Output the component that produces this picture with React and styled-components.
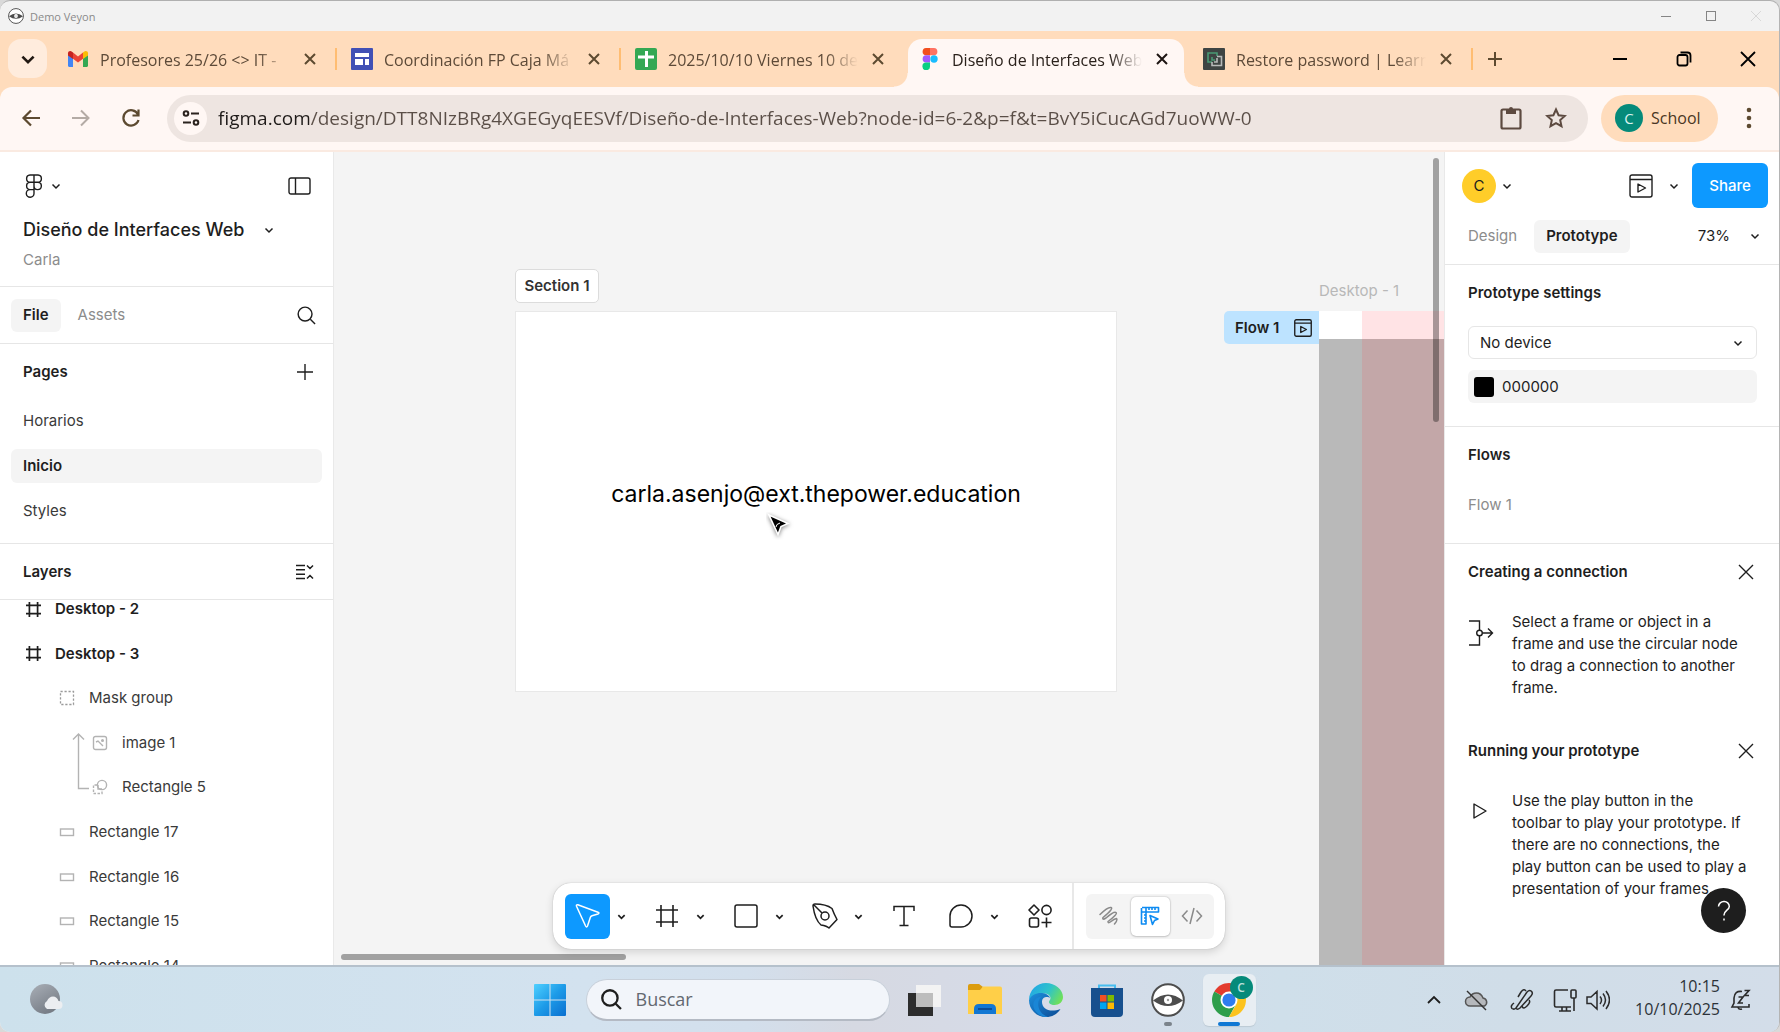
import React from "react";
import styled, { createGlobalStyle, css } from "styled-components";

const system = `"Open Sans", "Noto Sans", sans-serif`;
const inter = `Inter, "Liberation Sans", sans-serif`;

const GlobalStyle = createGlobalStyle`
  *, *::before, *::after { box-sizing: border-box; }
  body { margin: 0; background: #d9d9d9; }
  button, input, select { font: inherit; color: inherit; border: 0; margin: 0; padding: 0; background: none; }
  h1, h2, h3, p, ul { margin: 0; padding: 0; font: inherit; }
  ul { list-style: none; }
  svg { display: block; flex: none; }
`;

/* ---------- window ---------- */
const Window = styled.div`
  display: flex;
  flex-direction: column;
  height: 100vh;
  overflow: hidden;
  border-top: 1px solid #b0b0b0;
  border-right: 1px solid #b4b4b4;
  border-radius: 10px;
  background: #f2f2f2;
  font-family: ${system};
`;
const TitleBar = styled.header`
  display: flex;
  align-items: center;
  flex: none;
  height: 30px;
  padding: 0 11px 0 8px;
  gap: 6px;
  color: #8a8a8a;
  font-size: 11px;
`;
const WindowButtons = styled.div`
  display: flex;
  margin-left: auto;
  gap: ${(p) => p.$gap}px;
`;
const IconButton = styled.button`
  display: flex;
  align-items: center;
  justify-content: center;
  flex: none;
  width: ${(p) => p.$w || 24}px;
  height: ${(p) => p.$h || p.$w || 24}px;
`;

/* ---------- browser ---------- */
const TabStrip = styled.nav`
  display: flex;
  flex: none;
  height: 56px;
  padding: 8px 0 0 8px;
  background: #ffdcbc;
`;
const TabSearch = styled.button`
  display: flex;
  align-items: center;
  justify-content: center;
  width: 39px;
  height: 39px;
  margin-right: 9px;
  border-radius: 13px;
  background: #ffecdd;
`;
const Tab = styled.div`
  position: relative;
  display: flex;
  align-items: center;
  flex: none;
  width: 276px;
  height: 48px;
  padding: 0 10px 8px 11px;
  color: #5d4a38;
  ${(p) =>
    p.$active &&
    css`
      color: #2a211b;
      background: #fff7f4;
      border-radius: 14px 14px 0 0;
      &::before,
      &::after {
        content: "";
        position: absolute;
        bottom: 0;
        width: 14px;
        height: 14px;
      }
      &::before {
        right: 100%;
        background: radial-gradient(circle at 0 0, transparent 13px, #fff7f4 14px);
      }
      &::after {
        left: 100%;
        background: radial-gradient(circle at 100% 0, transparent 13px, #fff7f4 14px);
      }
    `}
`;
const TabIcon = styled.span`
  display: flex;
  justify-content: center;
  width: 22px;
  margin-right: 11px;
`;
const TabTitle = styled.span`
  flex: 1;
  min-width: 0;
  padding-top: 2px;
  white-space: nowrap;
  font-size: 16px;
  line-height: 24px;
  mask-image: linear-gradient(90deg, #000 158px, transparent 190px);
`;
const TabGap = styled.span`
  flex: none;
  width: 2px;
  height: 22px;
  margin: 9px 3px 0;
  background: ${(p) => (p.$hidden ? "transparent" : "#ffbd72")};
`;
const TabActions = styled.div`
  display: flex;
  flex: 1;
  height: 40px;
  align-items: center;
  padding: 0 19px 0 7px;
`;
const AddressRow = styled.div`
  background: #ffdcbc;
`;
const AddressBar = styled.div`
  display: flex;
  align-items: center;
  height: 65px;
  padding: 0 18px 1px 16px;
  border-bottom: 2px solid #faeae1;
  border-radius: 12px 12px 0 0;
  background: #fff7f4;
`;
const NavButtons = styled.div`
  display: flex;
  gap: 20px;
  width: 151px;
`;
const Omnibox = styled.label`
  display: flex;
  align-items: center;
  flex: 1;
  height: 47px;
  padding: 0 18px 0 7px;
  border-radius: 24px;
  background: #eee5e1;
`;
const SiteInfo = styled.span`
  display: flex;
  align-items: center;
  justify-content: center;
  width: 33px;
  height: 33px;
  margin-right: 11px;
  border-radius: 50%;
  background: #fff7f4;
`;
const UrlInput = styled.input`
  flex: 1;
  min-width: 0;
  height: 32px;
  font-size: 19px;
  color: transparent;
  background: linear-gradient(90deg, #1f1b19 91px, #5a4e47 91px);
  background-clip: text;
`;
const OmniActions = styled.span`
  display: flex;
  gap: 17px;
`;
const Profile = styled.button`
  display: flex;
  align-items: center;
  gap: 8px;
  height: 47px;
  width: 117px;
  margin: 0 19px 0 13px;
  padding: 0 14px;
  border-radius: 24px;
  background: #ffdcbc;
  color: #4a3623;
  font-size: 16px;
`;
const ProfileBadge = styled.span`
  display: flex;
  align-items: center;
  justify-content: center;
  width: 28px;
  height: 28px;
  border-radius: 50%;
  background: #058a7a;
  color: #d8f2ee;
  font-size: 15px;
`;

/* ---------- editor ---------- */
const Editor = styled.main`
  display: grid;
  grid-template-columns: 334px minmax(0, 1fr) 335px;
  flex: 1;
  min-height: 0;
  font-family: ${inter};
  font-size: 15px;
  line-height: 22px;
  color: #1e1e1e;
`;
const Sidebar = styled.aside`
  display: flex;
  flex-direction: column;
  min-height: 0;
  overflow: hidden;
  background: #fff;
  border-right: 1px solid #e9e9e9;
`;
const FileHeader = styled.div`
  padding: 11px 21px 0 23px;
  height: 135px;
  flex: none;
  border-bottom: 1px solid #e6e6e6;
`;
const HeaderRow = styled.div`
  display: flex;
  align-items: center;
  justify-content: space-between;
  height: 46px;
`;
const Cluster = styled.button`
  display: flex;
  align-items: center;
  gap: ${(p) => p.$gap || 8}px;
  padding: 0 ${(p) => p.$end || 0}px 0 ${(p) => p.$start || 0}px;
`;
const FileName = styled.h1`
  font-size: 18px;
  font-weight: 500;
  line-height: 24px;
`;
const TitleRow = styled.div`
  display: flex;
  align-items: center;
  gap: 18px;
  height: 42px;
`;
const Muted = styled.p`
  color: #8c8c8c;
  line-height: ${(p) => p.$line || 22}px;
`;
const TabsRow = styled.div`
  display: flex;
  align-items: center;
  flex: none;
  height: 57px;
  padding: 0 15px 0 11px;
  gap: 5px;
  border-bottom: 1px solid #e6e6e6;
`;
const Pill = styled.button`
  height: 33px;
  padding: 0 12px;
  border-radius: 6px;
  background: ${(p) => (p.$on ? "#f4f4f4" : "transparent")};
  color: ${(p) => (p.$on ? "#1e1e1e" : "#8c8c8c")};
  font-weight: ${(p) => (p.$on ? 600 : 400)};
`;
const Push = styled.span`
  margin: 0 ${(p) => p.$after || 0}px 0 auto;
`;
const Section = styled.section`
  flex: none;
  border-bottom: 1px solid #e6e6e6;
  padding-bottom: ${(p) => p.$bottom || 0}px;
`;
const SectionHead = styled.div`
  display: flex;
  align-items: center;
  justify-content: space-between;
  height: 55px;
  padding: 0 16px 0 23px;
`;
const Heading = styled.h2`
  font-weight: 600;
`;
const PageList = styled.ul`
  display: grid;
  gap: 11px;
  padding: 5px 11px 0;
`;
const PageItem = styled.button`
  width: 100%;
  height: 34px;
  padding: 0 12px;
  border-radius: 6px;
  text-align: left;
  background: ${(p) => (p.$on ? "#f4f4f4" : "transparent")};
  font-weight: ${(p) => (p.$on ? 600 : 400)};
  color: ${(p) => (p.$on ? "#1e1e1e" : "#3a3a3a")};
`;
const LayerView = styled.div`
  flex: 1;
  min-height: 0;
  overflow: hidden;
`;
const LayerList = styled.ul`
  position: relative;
  display: grid;
  grid-auto-rows: 1fr;
  height: 401px;
  margin-top: -13px;
`;
const LayerItem = styled.li`
  display: flex;
  align-items: center;
  gap: 14px;
  padding-left: ${(p) => 26 + p.$depth * 33}px;
  font-weight: ${(p) => (p.$depth ? 400 : 600)};
  color: ${(p) => (p.$depth ? "#3a3a3a" : "#1e1e1e")};
`;
const MaskLink = styled.svg`
  position: absolute;
  left: 72px;
  top: 145px;
`;

/* ---------- canvas ---------- */
const Canvas = styled.div`
  position: relative;
  overflow: hidden;
  background: #f4f4f4;
`;
const SectionLabel = styled.div`
  position: absolute;
  left: 181px;
  top: 117px;
  width: 84px;
  height: 34px;
  border: 1px solid #dcdcdc;
  border-radius: 5px;
  background: #fff;
  text-align: center;
  line-height: 32px;
  font-weight: 600;
  color: #333;
`;
const SectionBox = styled.div`
  position: absolute;
  left: 181px;
  top: 159px;
  width: 602px;
  height: 381px;
  display: flex;
  align-items: center;
  justify-content: center;
  padding-bottom: 16px;
  border: 1px solid #e8e8e8;
  background: #fff;
  color: #000;
  font-size: 23px;
  line-height: 30px;
`;
const Pointer = styled.svg`
  position: absolute;
  left: 432px;
  top: 360px;
`;
const FrameName = styled.span`
  position: absolute;
  left: 985px;
  top: 128px;
  color: #b8b8b8;
`;
const FlowTag = styled.button`
  position: absolute;
  left: 890px;
  top: 159px;
  display: flex;
  align-items: center;
  justify-content: space-between;
  width: 95px;
  height: 33px;
  padding: 0 7px 0 11px;
  border-radius: 5px 0 0 5px;
  background: #bde3ff;
  font-weight: 600;
`;
const FrameBox = styled.div`
  position: absolute;
  left: 985px;
  right: 0;
  top: 159px;
  bottom: 0;
  background: linear-gradient(#fff 28px, #b9b9b9 28px);
`;
const ColumnGuide = styled.div`
  position: absolute;
  left: 43px;
  right: 0;
  top: 0;
  bottom: 0;
  background: linear-gradient(#ffe3e5 28px, #c3a7a8 28px);
`;
const ScrollY = styled.div`
  position: absolute;
  right: 5px;
  top: 6px;
  width: 6px;
  height: 264px;
  border-radius: 3px;
  background: rgba(0, 0, 0, 0.34);
`;
const ScrollX = styled.div`
  position: absolute;
  left: 7px;
  bottom: 5px;
  width: 285px;
  height: 6px;
  border-radius: 3px;
  background: rgba(0, 0, 0, 0.34);
`;
const ToolBar = styled.div`
  position: absolute;
  left: 50%;
  bottom: 16px;
  transform: translateX(-50%);
  display: flex;
  align-items: center;
  height: 66px;
  padding: 0 11px 0 12px;
  border-radius: 18px;
  background: #fff;
  box-shadow: 0 0 1px rgba(0, 0, 0, 0.35), 0 3px 8px rgba(0, 0, 0, 0.14);
`;
const Tools = styled.div`
  display: flex;
  gap: 12px;
`;
const ToolGroup = styled.div`
  display: flex;
`;
const ToolButton = styled(IconButton)`
  width: 45px;
  height: 45px;
  border-radius: 6px;
  background: ${(p) => (p.$on ? "#0d99ff" : "transparent")};
`;
const ToolDivider = styled.span`
  width: 2px;
  height: 66px;
  margin: 0 12px 0 10px;
  background: #e8e8e8;
`;
const Modes = styled.div`
  display: flex;
  align-items: center;
  justify-content: space-between;
  width: 128px;
  height: 45px;
  padding: 0 3px;
  border-radius: 6px;
  background: #f4f4f4;
`;
const ModeButton = styled(IconButton)`
  width: 39px;
  height: 39px;
  border-radius: 5px;
  ${(p) => p.$on && "background: #fff; box-shadow: 0 0 2px rgba(0,0,0,.3), 0 1px 2px rgba(0,0,0,.12);"}
`;

/* ---------- right panel ---------- */
const Inspector = styled(Sidebar)`
  position: relative;
  border-right: 0;
  border-left: 1px solid #e9e9e9;
`;
const InspectorTop = styled.div`
  height: 113px;
  flex: none;
  padding: 11px 11px 0 17px;
  border-bottom: 1px solid #e6e6e6;
`;
const Avatar = styled.span`
  display: flex;
  align-items: center;
  justify-content: center;
  width: 34px;
  height: 34px;
  border-radius: 50%;
  background: #ffcd29;
`;
const ShareButton = styled.button`
  width: 76px;
  height: 45px;
  margin-left: 9px;
  border-radius: 6px;
  background: #0d99ff;
  color: #fff;
  font-weight: 500;
`;
const InspectorRow = styled.div`
  display: flex;
  align-items: center;
`;
const InspectorTabs = styled(InspectorRow)`
  height: 56px;
  gap: 5px;
  margin-left: -6px;
`;
const Fields = styled.div`
  display: grid;
  gap: 11px;
  padding: 6px 22px 23px 23px;
`;
const SelectWrap = styled.label`
  position: relative;
  display: flex;
  align-items: center;
  height: 33px;
  border: 1px solid #e6e6e6;
  border-radius: 6px;
  & > svg {
    position: absolute;
    right: 13px;
    pointer-events: none;
  }
`;
const Select = styled.select`
  appearance: none;
  width: 100%;
  height: 100%;
  padding-left: 11px;
`;
const ColorField = styled.label`
  display: flex;
  align-items: center;
  gap: 8px;
  height: 33px;
  padding: 0 6px;
  border-radius: 6px;
  background: #f4f4f4;
`;
const Swatch = styled.span`
  width: 20px;
  height: 20px;
  border-radius: 3px;
  background: #000;
`;
const ColorInput = styled.input`
  flex: 1;
  min-width: 0;
`;
const FlowName = styled(Muted)`
  padding: 12px 23px 27px;
`;
const Tip = styled.section`
  padding-bottom: 24px;
`;
const TipBody = styled.div`
  display: flex;
  gap: 18px;
  padding: 12px 20px 0 23px;
  white-space: nowrap;
  & > svg {
    margin-top: 9px;
  }
`;
const TipHead = styled(SectionHead)`
  padding-right: 21px;
`;
const Help = styled.button`
  position: absolute;
  right: 33px;
  bottom: 32px;
  display: flex;
  align-items: center;
  justify-content: center;
  width: 45px;
  height: 45px;
  border-radius: 50%;
  background: #1e1e1e;
`;

/* ---------- taskbar ---------- */
const Taskbar = styled.footer`
  display: grid;
  grid-template-columns: 1fr auto 1fr;
  align-items: center;
  flex: none;
  height: 67px;
  border-top: 2px solid #b5c1cc;
  background: linear-gradient(90deg, #cde1ec 0%, #d3e2ef 33%, #d3dfec 42%, #d6d9e2 48%, #d6dbe8 58%, #cfdfea 72%, #d0dde8 85%, #d3dde9 100%);
`;
const Weather = styled.button`
  justify-self: start;
  margin-left: 29px;
`;
const Apps = styled.div`
  display: flex;
  align-items: center;
`;
const AppButton = styled.button`
  position: relative;
  display: flex;
  align-items: center;
  justify-content: center;
  width: 61px;
  height: 52px;
  &::before {
    content: "";
    position: absolute;
    inset: 0 4px;
    border-radius: 6px;
    background: ${(p) => (p.$active ? "#e8eef3" : "transparent")};
    box-shadow: ${(p) => (p.$active ? "0 1px 1px #bccad4" : "none")};
  }
  &::after {
    content: "";
    position: absolute;
    bottom: 0;
    left: 50%;
    width: ${(p) => (p.$active ? 22 : p.$running ? 8 : 0)}px;
    height: 4px;
    border-radius: 2px;
    transform: translateX(-50%);
    background: ${(p) => (p.$active ? "#0f78d4" : "#7b838b")};
  }
  & > svg {
    position: relative;
  }
`;
const AppBadge = styled.span`
  position: absolute;
  left: 31px;
  top: 2px;
  width: 23px;
  height: 23px;
  border-radius: 50%;
  background: #058a7a;
  color: #b9dfda;
  font: 600 12px/23px ${system};
  text-align: center;
`;
const SearchBox = styled.label`
  display: flex;
  align-items: center;
  gap: 14px;
  width: 304px;
  height: 42px;
  margin: 0 4px 0 5px;
  padding: 0 14px;
  border: 1px solid #c8d0da;
  border-bottom: 2px solid #b4bac4;
  border-radius: 21px;
  background: #f2f5fa;
`;
const SearchInput = styled.input`
  flex: 1;
  min-width: 0;
  font-size: 18px;
  &::placeholder {
    color: #636870;
    opacity: 1;
  }
`;
const Tray = styled.div`
  display: flex;
  align-items: center;
  justify-self: end;
  padding-right: 28px;
`;
const TrayIcons = styled.div`
  display: flex;
  align-items: center;
  gap: ${(p) => p.$gap}px;
  margin-right: ${(p) => p.$after}px;
`;
const Clock = styled.div`
  width: 97px;
  margin-right: 10px;
  padding-bottom: 3px;
  text-align: right;
  font-size: 16px;
  line-height: 23px;
  color: #2c3238;
`;

/* ---------- drawings ---------- */
const Icon = ({ w = 24, h = w, vb, color = "#1e1e1e", sw = 1.4, children }) => (
  <svg width={w} height={h} viewBox={vb || `0 0 ${w} ${h}`} fill="none" stroke={color} strokeWidth={sw} aria-hidden="true">
    {children}
  </svg>
);
const Chevron = ({ w = 10, sw = 1.5, color }) => (
  <Icon w={w} vb="0 0 10 10" sw={sw} color={color}><path d="M1.500 3.500 5 7l3.500-3.500" /></Icon>
);
const Cross = ({ s = 12, sw = 2, color }) => (
  <Icon w={s} sw={sw} color={color}><path d={`M1 1 ${s - 1} ${s - 1}M${s - 1} 1 1 ${s - 1}`} /></Icon>
);
const Veyon = ({ s }) => (
  <Icon w={s} vb="0 0 34 34" color="#4d4d4d" sw="2">
    <circle cx="17" cy="17" r="15.800" fill="#fff" />
    <path d="M2 17.500Q17 5.500 32 17.500 17 28.500 2 17.500Z" fill="#4d4d4d" stroke="none" />
    <circle cx="17" cy="17" r="4" fill="#fff" stroke="none" />
    <circle cx="17" cy="17" r="1.200" fill="#9a9a9a" stroke="none" />
  </Icon>
);
const Gmail = () => (
  <Icon w={22} h={22} sw={0}>
    <path d="M1 6v11.500c0 .8.600 1.500 1.500 1.500H6v-9z" fill="#4285f4" />
    <path d="M21 6v11.500c0 .8-.6 1.500-1.500 1.500H16v-9z" fill="#34a853" />
    <path d="M6 4.500v6.200l5 3.800 5-3.800V4.500l-5 3.900z" fill="#ea4335" />
    <path d="M1 5.300v2.200L6 11V4.500l-1-.8C3.300 2.400 1 3.300 1 5.300Z" fill="#c5221f" />
    <path d="M21 5.300v2.200L16 11V4.500l1-.8c1.700-1.300 4-.4 4 1.600Z" fill="#fbbc04" />
  </Icon>
);
const Sites = () => (
  <Icon w={22} sw={0}>
    <rect width="22" height="22" rx="1" fill="#4150b5" />
    <path d="M4 5h14v4H4zM4 11h8v6H4zM14 11h4v6h-4z" fill="#fff" />
  </Icon>
);
const Sheets = () => (
  <Icon w={22} sw={0}>
    <rect width="22" height="22" rx="2" fill="#34a853" />
    <path d="M3 7.500h7V3h3v4.500h6v3h-6V19h-3v-8.500H3z" fill="#fff" />
  </Icon>
);
const FigmaColor = () => (
  <Icon w={16} h={22} vb="0 0 16 22" sw={0}>
    <path d="M4 0h4v7.300H4A3.660 3.660 0 0 1 4 0Z" fill="#f24e1e" />
    <path d="M8 0h4a3.660 3.660 0 0 1 0 7.300H8z" fill="#ff7262" />
    <path d="M4 7.300h4v7.300H4a3.660 3.660 0 0 1 0-7.300Z" fill="#a259ff" />
    <circle cx="12" cy="11" r="3.700" fill="#1abcfe" />
    <path d="M4 14.600h4V18a3.800 3.800 0 1 1-4-3.400Z" fill="#0acf83" />
  </Icon>
);
const Learn = () => (
  <Icon w={22} sw={1.6}>
    <rect width="22" height="22" rx="1" fill="#3e4443" stroke="none" />
    <path d="M9 14H5V5h9v3M9 9v3h3" stroke="#4a9a76" />
    <path d="M14 8.500h4.500v9H9V14M11 14h3V10" stroke="#b7bab9" />
  </Icon>
);
const FigmaLine = () => (
  <Icon w={18} h={24}>
    <path d="M9 1H5a3.660 3.660 0 0 0 0 7.300h4zM9 1h4a3.660 3.660 0 0 1 0 7.300H9zM9 8.300H5a3.660 3.660 0 0 0 0 7.300h4zM9 8.300h4a3.660 3.660 0 1 1-4 3.650zM9 15.600H5a3.850 3.850 0 1 0 4 3.700z" />
  </Icon>
);
const Hash = ({ s = 14, sw = 1.6, color }) => (
  <Icon w={s} vb="0 0 22 22" sw={(sw * 22) / s} color={color}><path d="M5 0v22M17 0v22M0 5h22M0 17h22" /></Icon>
);
const Magnifier = ({ s = 20, sw = 1.5 }) => (
  <Icon w={s} vb="0 0 20 20" sw={sw}><circle cx="8.500" cy="8.500" r="7.300" /><path d="m14 14 5 5" /></Icon>
);
const PlayWindow = ({ s = 24, sw = 1.4 }) => (
  <Icon w={s} vb="0 0 24 24" sw={sw}>
    <rect x="1" y="1" width="22" height="22" rx="2" />
    <path d="M1 5.500h22M9 10v8l7.500-4z" strokeLinejoin="round" />
  </Icon>
);
const LayerIcon = ({ kind }) => {
  if (kind === "frame") return <Hash s={15} sw={1.7} />;
  if (kind === "mask") return <Icon w={16} color="#9a9a9a" sw={1.3}><rect x="1.500" y="1.500" width="13" height="13" strokeDasharray="2.200 1.800" /></Icon>;
  if (kind === "image") return <Icon w={16} color="#b3b3b3" sw={1.4}><rect x="1.500" y="1.500" width="13" height="13" rx="2" /><path d="m4 7 2-1 5 5" /><circle cx="10.500" cy="5.500" r=".8" fill="#b3b3b3" /></Icon>;
  if (kind === "shape") return <Icon w={16} color="#b3b3b3" sw={1.4}><circle cx="10" cy="6" r="4.600" /><path d="M5 6H1.500v8.500H10V11" strokeDasharray="2.500 1.500" /><path d="M6 6v4h4" /></Icon>;
  return <Icon w={16} color="#b3b3b3" sw={1.4}><rect x="1.500" y="5" width="13" height="6.500" /></Icon>;
};
const Folder = () => (
  <Icon w={34} sw={0}>
    <path d="M0 3q0-2 2-2h9l4 3-3 5H0z" fill="#dc9c0e" />
    <path d="M0 7h12l3-3.500h17q2 0 2 2V31H0z" fill="#ffcf48" />
    <path d="M6 31v-5q0-5 5-5h12q5 0 5 5v5z" fill="#1277d3" /><path d="M10 25h14v2H10z" fill="#0b4d99" />
  </Icon>
);
const Edge = () => (
  <Icon w={34} sw={0}>
    <defs>
      <linearGradient id="edgeTop" x1="0" y1=".2" x2="1" y2=".6"><stop offset="0" stopColor="#22a5e8" /><stop offset=".55" stopColor="#2fc3c9" /><stop offset="1" stopColor="#6fe05a" /></linearGradient>
      <linearGradient id="edgeLow" x1="0" y1="0" x2="1" y2="1"><stop offset="0" stopColor="#1d8fdd" /><stop offset="1" stopColor="#0c4a94" /></linearGradient>
    </defs>
    <path d="M0 17C0 7 8 0 17 0s17 6.500 17 14c0 5-4 8-8.500 8-4 0-5.500-1.800-5.500-3 0-1.500 1.500-2 1.500-4 0-2.500-3-4.500-6.500-4.500C7 10.500 2 14 0 17Z" fill="url(#edgeTop)" />
    <path d="M0 17c2-5 8-7.500 13-7 4 .4 7.500 2.500 8 5-1.500-1.500-8-2-8 4 0 7 8 11 18.500 7C28 31.500 23 34 17 34 7.500 34 0 26.500 0 17Z" fill="url(#edgeLow)" />
    <path d="M13 13.500C6 18 9 31 19 34 10 34.500 3 27 4.500 20 5.500 16 9 13.500 13 13.500Z" fill="#1a86d6" />
  </Icon>
);
const Store = () => (
  <Icon w={34} sw={0}>
    <path d="M9 6V2.500h16V6" fill="none" stroke="#46bdf0" strokeWidth="2" />
    <path d="M1 5h32v25q0 4-4 4H5q-4 0-4-4z" fill="#17508e" />
    <path d="M10 12h6.500v6.500H10z" fill="#f25022" /><path d="M17.500 12H24v6.500h-6.500z" fill="#7fba00" />
    <path d="M10 19.500h6.500V26H10z" fill="#00a4ef" /><path d="M17.500 19.500H24V26h-6.500z" fill="#ffb900" />
  </Icon>
);
const Chrome = () => (
  <Icon w={34} sw={0}>
    <path d="M17 17 2.300 8.500A17 17 0 0 1 31.700 8.500z" fill="#e33b2e" />
    <path d="M17 17 2.300 8.500A17 17 0 0 0 17 34l7-13z" fill="#2e9e4b" />
    <path d="M17 34A17 17 0 0 0 31.700 8.500H17l7.300 12.700z" fill="#fcc31e" />
    <circle cx="17" cy="17" r="8.500" fill="#fff" /><circle cx="17" cy="17" r="6.600" fill="#2f7cf0" />
  </Icon>
);

const tabs = [
  { icon: <Gmail />, title: "Profesores 25/26 <> IT -" },
  { icon: <Sites />, title: "Coordinación FP Caja Má" },
  { icon: <Sheets />, title: "2025/10/10 Viernes 10 de" },
  { icon: <FigmaColor />, title: "Diseño de Interfaces Web", active: true },
  { icon: <Learn />, title: "Restore password | Learn" },
];
const layers = [
  ["frame", "Desktop - 2", 0], ["frame", "Desktop - 3", 0], ["mask", "Mask group", 1],
  ["image", "image 1", 2], ["shape", "Rectangle 5", 2], ["rect", "Rectangle 17", 1],
  ["rect", "Rectangle 16", 1], ["rect", "Rectangle 15", 1], ["rect", "Rectangle 14", 1],
];
const tools = [
  { name: "Move", menu: true, on: true, icon: <Icon w={26} color="#fff" sw={1.5}><path d="M2.800 1.700 23 9.200q2 .9 0 1.800l-6 1.800q-1.200.4-1.600 1.500L12.500 23q-.9 1.800-1.900 0L1.500 3.300Q1 1.500 2.800 1.700Z" strokeLinejoin="round" /></Icon> },
  { name: "Frame", menu: true, icon: <Hash s={22} sw={1.6} /> },
  { name: "Rectangle", menu: true, icon: <Icon w={24} sw={1.5}><rect x="1" y="1" width="22" height="22" rx="2" /></Icon> },
  { name: "Pen", menu: true, icon: <Icon w={26} sw={1.5}><path d="M1 3Q1 1 3 1q11 0 17 4.500 2 5.500 5 11L17 25Q15 23 9 22 3 17 1 3ZM2 2l8 8" strokeLinejoin="round" /><circle cx="13" cy="13" r="4" /></Icon> },
  { name: "Text", icon: <Icon w={22} sw={1.5}><path d="M1 6V1.500h20V6M11 1.500v19M6.500 20.500h9" /></Icon> },
  { name: "Comment", menu: true, icon: <Icon w={24} sw={1.5}><path d="M12 1a11 11 0 0 1 0 22H3q-2 0-2-2v-9A11 11 0 0 1 12 1Z" /></Icon> },
  { name: "Actions", icon: <Icon w={24} sw={1.6}><path d="m6 1 5 5-5 5-5-5z" strokeLinejoin="round" /><circle cx="18.500" cy="6" r="4.600" /><rect x="1.500" y="14" width="9" height="9" rx="2" /><path d="M18.500 13.500v10M13.500 18.500h10" /></Icon> },
];

export default function App() {
  return (
    <Window>
      <GlobalStyle />
      <TitleBar>
        <Veyon s={16} />
        <span>Demo Veyon</span>
        <WindowButtons $gap={21}>
          <IconButton aria-label="Minimize"><Icon w={12} color="#858585" sw={1}><path d="M1 6.500h10" /></Icon></IconButton>
          <IconButton aria-label="Maximize"><Icon w={12} color="#858585" sw={1}><rect x="1.500" y="1.500" width="9" height="9" /></Icon></IconButton>
          <IconButton aria-label="Close"><Cross s={12} sw={1} color="#d8d8d8" /></IconButton>
        </WindowButtons>
      </TitleBar>

      <TabStrip>
        <TabSearch aria-label="Search tabs"><Chevron w={16} sw={1.6} color="#211812" /></TabSearch>
        {tabs.map((t, i) => (
          <React.Fragment key={t.title}>
            <Tab $active={t.active}>
              <TabIcon>{t.icon}</TabIcon>
              <TabTitle>{t.title}</TabTitle>
              <IconButton aria-label="Close tab"><Cross s={12} sw={2} color={t.active ? "#1d1512" : "#5d4a30"} /></IconButton>
            </Tab>
            <TabGap $hidden={i === 2 || i === 3} />
          </React.Fragment>
        ))}
        <TabActions>
          <IconButton aria-label="New tab"><Icon w={16} sw={2} color="#5d4a30"><path d="M8 1v14M1 8h14" /></Icon></IconButton>
          <WindowButtons $gap={40}>
            <IconButton aria-label="Minimize"><Icon w={16} sw={1.8} color="#000"><path d="M1 8h14" /></Icon></IconButton>
            <IconButton aria-label="Restore"><Icon w={16} sw={1.8} color="#000"><rect x="1.500" y="4" width="10" height="10.500" rx="2" /><path d="M4.500 1.500h7q3 0 3 3v7" /></Icon></IconButton>
            <IconButton aria-label="Close"><Cross s={16} sw={1.8} color="#000" /></IconButton>
          </WindowButtons>
        </TabActions>
      </TabStrip>
      <AddressRow>
        <AddressBar>
          <NavButtons>
            <IconButton $w={30} aria-label="Back"><Icon w={20} sw={2.2} color="#5d4a30"><path d="M19 10H3M10 2.500 2.500 10l7.500 7.500" /></Icon></IconButton>
            <IconButton $w={30} aria-label="Forward"><Icon w={20} sw={2} color="#b4aba5"><path d="M1 10h16M10 2.500 17.500 10 10 17.500" /></Icon></IconButton>
            <IconButton $w={30} aria-label="Reload"><Icon w={20} sw={2.200} color="#5d4a30"><path d="M17.500 12A7.700 7.700 0 1 1 17 6.500M17.500 1.500v6H11.500" /></Icon></IconButton>
          </NavButtons>
          <Omnibox>
            <SiteInfo>
              <Icon w={18} sw={2} color="#2b231e"><circle cx="4" cy="4.500" r="2.300" /><path d="M9 4.500h8M1 13.500h8" /><circle cx="14" cy="13.500" r="2.300" /></Icon>
            </SiteInfo>
            <UrlInput aria-label="Address" defaultValue="figma.com/design/DTT8NIzBRg4XGEGyqEESVf/Diseño-de-Interfaces-Web?node-id=6-2&p=f&t=BvY5iCucAGd7uoWW-0" />
            <OmniActions>
              <IconButton $w={28} aria-label="Clipboard"><Icon w={24} sw={2.200} color="#5d4a40"><rect x="2.500" y="3.500" width="19" height="19" rx="1.500" /><path d="M7 3h3a2 2 0 0 1 4 0h3v5H7z" fill="#5d4a40" stroke="none" /></Icon></IconButton>
              <IconButton $w={28} aria-label="Bookmark"><Icon w={22} sw={2} color="#5d4a40"><path d="m11 2.500 2.600 5.700 6.200.7-4.600 4.200 1.300 6.100L11 16.100l-5.500 3.100 1.300-6.100L2.200 8.900l6.200-.7z" /></Icon></IconButton>
            </OmniActions>
          </Omnibox>
          <Profile><ProfileBadge>C</ProfileBadge>School</Profile>
          <IconButton aria-label="Menu"><Icon w={6} h={22} sw={0}><g fill="#5d4a30"><circle cx="3" cy="3" r="2.300" /><circle cx="3" cy="11" r="2.300" /><circle cx="3" cy="19" r="2.300" /></g></Icon></IconButton>
        </AddressBar>
      </AddressRow>

      <Editor>
        <Sidebar>
          <FileHeader>
            <HeaderRow>
              <Cluster $start={2} aria-label="Main menu"><FigmaLine /><Chevron /></Cluster>
              <IconButton aria-label="Collapse panel"><Icon w={24} h={18}><rect x="1" y="1" width="21" height="16" rx="2" /><path d="M7.500 1v16" /></Icon></IconButton>
            </HeaderRow>
            <TitleRow>
              <FileName>Diseño de Interfaces Web</FileName>
              <IconButton $w={14} aria-label="File menu"><Chevron /></IconButton>
            </TitleRow>
            <Muted $line={18}>Carla</Muted>
          </FileHeader>
          <TabsRow>
            <Pill $on>File</Pill>
            <Pill>Assets</Pill>
            <Push><IconButton aria-label="Find"><Magnifier s={19} /></IconButton></Push>
          </TabsRow>
          <Section $bottom={15}>
            <SectionHead>
              <Heading>Pages</Heading>
              <IconButton aria-label="Add page"><Icon w={16}><path d="M8 0v16M0 8h16" /></Icon></IconButton>
            </SectionHead>
            <PageList>
              <li><PageItem>Horarios</PageItem></li>
              <li><PageItem $on>Inicio</PageItem></li>
              <li><PageItem>Styles</PageItem></li>
            </PageList>
          </Section>
          <Section>
            <SectionHead>
              <Heading>Layers</Heading>
              <IconButton aria-label="Collapse layers"><Icon w={18} h={16} sw={1.5}><path d="M0 1.500h9M0 5.800h9M0 10.200h9M0 14.500h9M11 1.500 14 4.500l3-3M11 14.500l3-3 3 3" /></Icon></IconButton>
            </SectionHead>
          </Section>
          <LayerView>
            <LayerList>
              {layers.map(([kind, name, depth]) => (
                <LayerItem key={name} $depth={depth}><LayerIcon kind={kind} />{name}</LayerItem>
              ))}
              <MaskLink width="18" height="58" fill="none" stroke="#b3b3b3" strokeWidth="1.400"><path d="M17 56.500H6.500V2M1 7.500 6.500 2 12 7.500" /></MaskLink>
            </LayerList>
          </LayerView>
        </Sidebar>

        <Canvas>
          <SectionLabel>Section 1</SectionLabel>
          <SectionBox>carla.asenjo@ext.thepower.education</SectionBox>
          <Pointer width="28" height="28" viewBox="0 0 28 28">
            <path d="M3 3 22 11.500l-7 3-3 8z" fill="#000" stroke="#fff" strokeWidth="1.600" filter="drop-shadow(0 1px 2px rgba(0,0,0,.5))" />
            <path d="M10 15q0-3 4-4" fill="none" stroke="#fff" strokeWidth="1" />
          </Pointer>
          <FrameName>Desktop - 1</FrameName>
          <FrameBox><ColumnGuide /></FrameBox>
          <FlowTag>Flow 1<PlayWindow s={18} sw={1.8} /></FlowTag>
          <ScrollY />
          <ScrollX />
          <ToolBar>
            <Tools>
              {tools.map((t) => (
                <ToolGroup key={t.name}>
                  <ToolButton $on={t.on} aria-label={t.name}>{t.icon}</ToolButton>
                  {t.menu && <IconButton $w={22} $h={45} aria-label={`${t.name} options`}><Chevron w={9} sw={1.9} /></IconButton>}
                </ToolGroup>
              ))}
            </Tools>
            <ToolDivider />
            <Modes>
              <ModeButton aria-label="Draw"><Icon w={20} color="#8a8a8a" sw={1.5}><path d="M1 8.500Q9 .5 12 1.500T4 11.500Q3 14.500 7 12 15 5 17 6.500T9 15.500Q9 18 12 15.500T17.500 12.500Q19 14 15.500 18" strokeLinecap="round" /></Icon></ModeButton>
              <ModeButton $on aria-label="Design"><Icon w={20} color="#0d8bf2" sw={1.6}><path d="M2 1.500h16.500V6H6v12H1.500V2M6 1.500V6H1.500M9 2v2M12 2v2M15 2v2M4 9h2M4 12h2M4 15h2M10 9.500l8 3.500-3.500 1.500-2 4z" strokeLinejoin="round" /></Icon></ModeButton>
              <ModeButton aria-label="Dev"><Icon w={22} color="#8a8a8a" sw={1.5}><path d="M6.500 5.500 1.500 11l5 5.500M15.500 5.500l5 5.500-5 5.500M13 3 9 19" /></Icon></ModeButton>
            </Modes>
          </ToolBar>
        </Canvas>

        <Inspector>
          <InspectorTop>
            <InspectorRow>
              <Cluster $gap={6}><Avatar>C</Avatar><Chevron /></Cluster>
              <Push $after={12}><IconButton aria-label="Present"><PlayWindow /></IconButton></Push>
              <IconButton $w={18} $h={24} aria-label="Present options"><Chevron /></IconButton>
              <ShareButton>Share</ShareButton>
            </InspectorRow>
            <InspectorTabs>
              <Pill>Design</Pill>
              <Pill $on>Prototype</Pill>
              <Push><Cluster $gap={20} $end={8}>73%<Chevron /></Cluster></Push>
            </InspectorTabs>
          </InspectorTop>
          <Section>
            <SectionHead><Heading>Prototype settings</Heading></SectionHead>
            <Fields>
              <SelectWrap>
                <Select aria-label="Device" defaultValue="none"><option value="none">No device</option></Select>
                <Chevron />
              </SelectWrap>
              <ColorField><Swatch /><ColorInput aria-label="Background" defaultValue="000000" /></ColorField>
            </Fields>
          </Section>
          <Section>
            <SectionHead><Heading>Flows</Heading></SectionHead>
            <FlowName>Flow 1</FlowName>
          </Section>
          <Tip>
            <TipHead><Heading>Creating a connection</Heading><IconButton $w={24} aria-label="Dismiss"><Cross s={16} sw={1.4} /></IconButton></TipHead>
            <TipBody>
              <Icon w={26} h={26}><path d="M1 1h10.500v9M1 25h10.500v-9M14.500 13H24M20 8.500l4.500 4.500-4.500 4.500" /><circle cx="11.500" cy="13" r="2.800" /></Icon>
              <p>
                Select a frame or object in a<br />
                frame and use the circular node<br />
                to drag a connection to another<br />
                frame.
              </p>
            </TipBody>
          </Tip>
          <Tip>
            <TipHead><Heading>Running your prototype</Heading><IconButton $w={24} aria-label="Dismiss"><Cross s={16} sw={1.4} /></IconButton></TipHead>
            <TipBody>
              <Icon w={26} h={24}><path d="M6 5v14l12-7z" strokeLinejoin="round" /></Icon>
              <p>
                Use the play button in the<br />
                toolbar to play your prototype. If<br />
                there are no connections, the<br />
                play button can be used to play a<br />
                presentation of your frames.
              </p>
            </TipBody>
          </Tip>
          <Help aria-label="Help"><Icon w={14} h={22} color="#fff" sw={1.5}><path d="M1.500 6.500A5.300 5.300 0 0 1 7 1.500a5 5 0 0 1 5.300 5C12.300 10 7 10.500 7 15v.5M7 18.500v2" /></Icon></Help>
        </Inspector>
      </Editor>

      <Taskbar>
        <Weather aria-label="Weather">
          <Icon w={34} h={32} sw={0}>
            <defs><linearGradient id="moon" x1="0" y1="0" x2=".6" y2="1"><stop offset="0" stopColor="#a9afb7" /><stop offset="1" stopColor="#767c85" /></linearGradient></defs>
            <circle cx="16" cy="15" r="15" fill="url(#moon)" />
            <path d="M18 25a4.500 4.500 0 0 1 0-8q2-4.500 6-4.500t5.500 4.500a4 4 0 0 1 0 8z" fill="#eceef1" />
          </Icon>
        </Weather>
        <Apps>
          <AppButton aria-label="Start">
            <Icon w={32} sw={0}>
              <defs><linearGradient id="win" x1="0" y1="0" x2="1" y2="1"><stop offset="0" stopColor="#4fd0ff" /><stop offset=".5" stopColor="#1d9be8" /><stop offset="1" stopColor="#0a6fd0" /></linearGradient></defs>
              <path d="M0 1q0-1 1-1h14.500v15.500H0zM16.500 0H31q1 0 1 1v14.500H16.500zM0 16.500h15.500V32H1q-1 0-1-1zM16.500 16.500H32V31q0 1-1 1H16.500z" fill="url(#win)" />
            </Icon>
          </AppButton>
          <SearchBox><Magnifier s={21} sw={2.200} /><SearchInput aria-label="Buscar" placeholder="Buscar" /></SearchBox>
          <AppButton aria-label="Task view">
            <Icon w={34} sw={0}><path d="M1 10h25v23H1z" fill="#2d2d2d" /><path d="M9 2h25v22H9z" fill="#f3f3f3" /><path d="M9 10h17v14H9z" fill="#bdbdbd" /></Icon>
          </AppButton>
          <AppButton aria-label="Explorer"><Folder /></AppButton>
          <AppButton aria-label="Edge"><Edge /></AppButton>
          <AppButton aria-label="Store"><Store /></AppButton>
          <AppButton $running aria-label="Veyon"><Veyon s={34} /></AppButton>
          <AppButton $active aria-label="Chrome"><Chrome /><AppBadge>C</AppBadge></AppButton>
        </Apps>
        <Tray>
          <TrayIcons $gap={20} $after={19}>
            <Icon w={20} sw={1.8}><path d="m4 13 6-6 6 6" /></Icon>
            <Icon w={26} h={24} sw={1.5} color="#555"><path d="M6 18a4.500 4.500 0 0 1 0-9Q8 5 12.500 5T19 10a4.300 4.300 0 0 1 1.500 8z" fill="#b5b8bc" /><path d="m3 3 19 19" stroke="#333" /></Icon>
            <Icon w={24} sw={1.5} color="#2b2b2b"><path d="M4 15q-4 3-2 5.500 2 1.500 4-.5L17 4q3-3 5 0 1 2-1 4L10 20q-3 2.500-4 0M16 3q-2-3-5 1l-3 5M12 18q1 4 5 0t2-6" /></Icon>
          </TrayIcons>
          <TrayIcons $gap={9} $after={13}>
            <Icon w={24} sw={1.6} color="#2b2b2b"><path d="M15 2H3q-1.500 0-1.500 1.500v14q0 1.500 1.500 1.500h15M6 23h12M9 19v4M13.500 19v4M21 10v13" /><rect x="18" y="2" width="5" height="8" rx="1" /></Icon>
            <Icon w={24} sw={1.5} color="#2b2b2b"><path d="M1 9v6.500h4L11 21V3.500L5 9zM14 8.500q3 3.500 0 7.500M17 5.500q5 6.500 0 13M20 3q7 9 0 18" /></Icon>
          </TrayIcons>
          <Clock>10:15<br />10/10/2025</Clock>
          <Icon w={21} h={22} sw={1.6} color="#2b2b2b"><path d="M12 2.500Q4.500 1.500 4 9v5l-2 4h17v-3M8 18.500q1 2.500 4 1.500M8.500 8h4.500l-4.500 6H13M14.500 1.500H19l-4.500 5H19" /></Icon>
        </Tray>
      </Taskbar>
    </Window>
  );
}
